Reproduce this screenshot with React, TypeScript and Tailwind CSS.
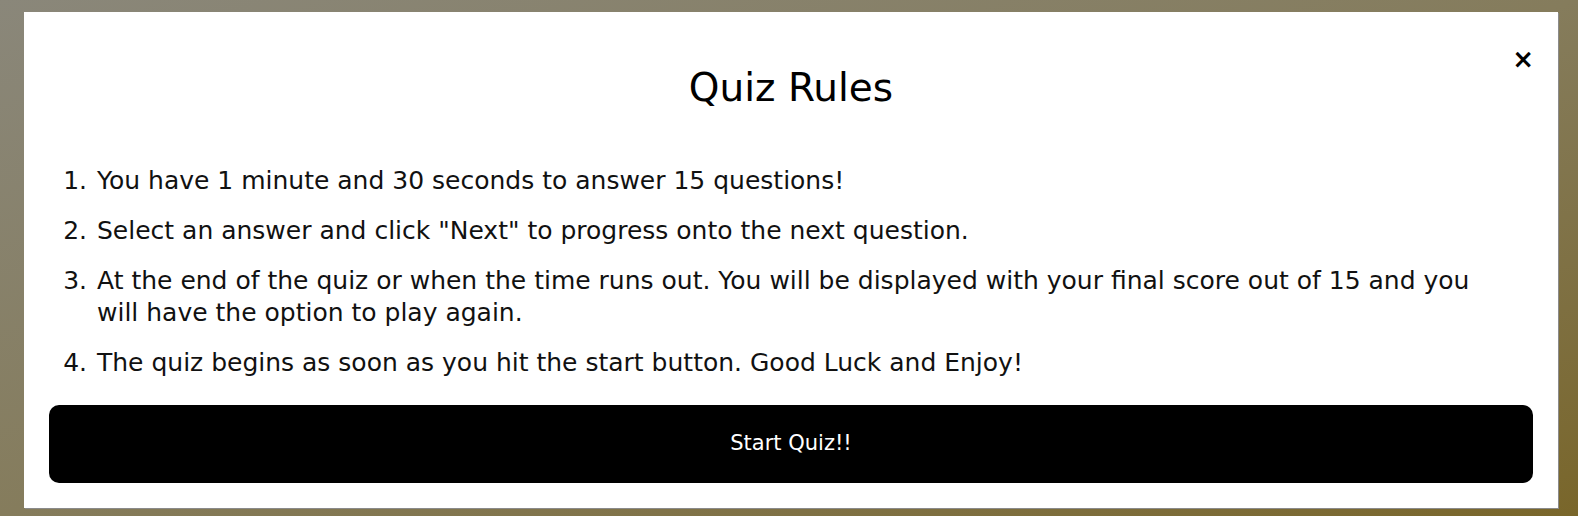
import React from 'react';

const rules = [
  'You have 1 minute and 30 seconds to answer 15 questions!',
  'Select an answer and click "Next" to progress onto the next question.',
  'At the end of the quiz or when the time runs out. You will be displayed with your final score out of 15 and you will have the option to play again.',
  'The quiz begins as soon as you hit the start button. Good Luck and Enjoy!',
];

export default function App() {
  return (
    <div
      className="h-[516px] w-full overflow-hidden bg-gradient-to-br from-[#8a877a] via-[#857c5c] to-[#79662a] pt-[12px] pl-[24px] pr-[20px] pb-[8px]"
      style={{ fontFamily: '"DejaVu Sans", "Open Sans", sans-serif' }}
    >
      <div className="relative flex h-full flex-col bg-white px-[25px] pb-[25px] shadow-[1px_1px_0_#8a8a8a]">
        <button className="absolute right-[24px] top-[32px] text-[26px] font-bold leading-[30px] text-black">
          ×
        </button>
        <h2 className="mt-[54px] text-center text-[39px] leading-[44px] text-black">Quiz Rules</h2>
        <ol className="mt-[55px] list-decimal pl-[46px] pr-[30px] text-[25px] leading-[32px] text-[#111]">
          {rules.map(r => (
            <li key={r} className="mb-[18px] pl-[2px]">
              {r}
            </li>
          ))}
        </ol>
        <button className="mt-auto h-[78px] w-full rounded-[10px] bg-black text-[21px] text-white">
          Start Quiz!!
        </button>
      </div>
    </div>
  );
}
